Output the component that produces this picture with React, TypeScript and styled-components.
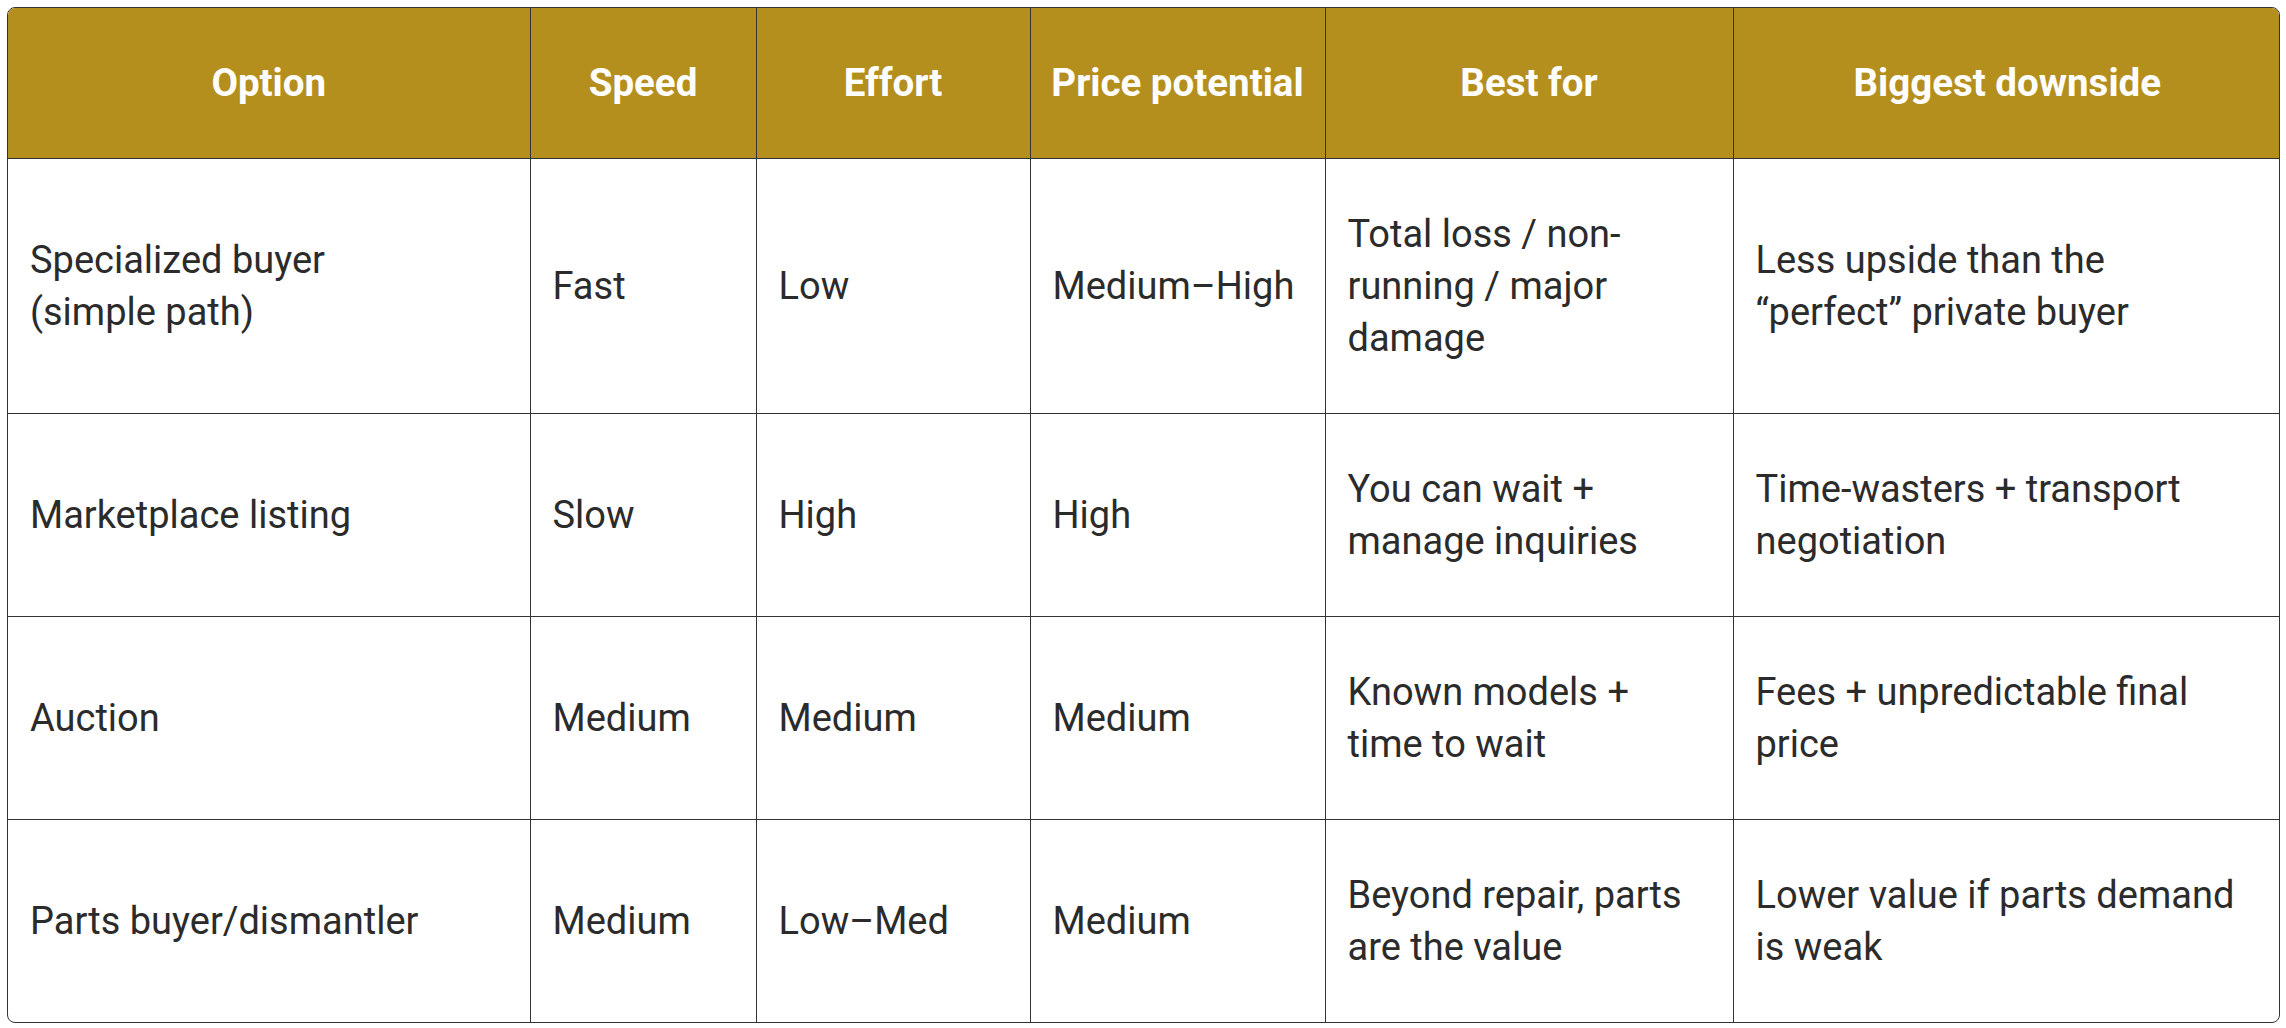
import React from "react";
import styled, { createGlobalStyle } from "styled-components";

const GlobalStyle = createGlobalStyle`
  html, body {
    margin: 0;
    padding: 0;
    background: #fff;
  }
  body {
    font-family: Roboto, "Liberation Sans", sans-serif;
  }
`;

const Page = styled.div`
  padding: 7px 6px 7px 7px;
`;

const Frame = styled.div`
  border: 1px solid #333;
  border-radius: 8px;
  overflow: hidden;
`;

const Table = styled.table`
  width: 100%;
  border-collapse: collapse;
  table-layout: fixed;
`;

const HeadCell = styled.th`
  background: #b58f1e;
  color: #fff;
  font-weight: 700;
  font-size: 38.5px;
  line-height: 52px;
  padding: 49px 10px;
  text-align: center;
  border-left: 1px solid #333;
  border-bottom: 1px solid #333;
  &:first-child {
    border-left: none;
  }
`;

const Cell = styled.td`
  color: #2b2b2b;
  font-size: 38px;
  line-height: 52px;
  padding: 49px 22px;
  vertical-align: middle;
  border-left: 1px solid #333;
  border-top: 1px solid #333;
  &:first-child {
    border-left: none;
  }
`;

const Row = styled.tr`
  &:first-child td {
    border-top: none;
  }
`;

const columns = [
  { label: "Option", width: 522 },
  { label: "Speed", width: 226 },
  { label: "Effort", width: 274 },
  { label: "Price potential", width: 295 },
  { label: "Best for", width: 408 },
  { label: "Biggest downside", width: 548 },
];

const rows: React.ReactNode[][] = [
  [
    <>
      Specialized buyer
      <br />
      (simple path)
    </>,
    "Fast",
    "Low",
    "Medium–High",
    "Total loss / non-running / major damage",
    "Less upside than the “perfect” private buyer",
  ],
  [
    "Marketplace listing",
    "Slow",
    "High",
    "High",
    "You can wait + manage inquiries",
    "Time-wasters + transport negotiation",
  ],
  [
    "Auction",
    "Medium",
    "Medium",
    "Medium",
    "Known models + time to wait",
    "Fees + unpredictable final price",
  ],
  [
    "Parts buyer/dismantler",
    "Medium",
    "Low–Med",
    "Medium",
    "Beyond repair, parts are the value",
    "Lower value if parts demand is weak",
  ],
];

export default function App() {
  return (
    <Page>
      <GlobalStyle />
      <Frame>
        <Table>
          <colgroup>
            {columns.map((c) => (
              <col key={c.label} style={{ width: c.width }} />
            ))}
          </colgroup>
          <thead>
            <tr>
              {columns.map((c) => (
                <HeadCell key={c.label}>{c.label}</HeadCell>
              ))}
            </tr>
          </thead>
          <tbody>
            {rows.map((r, ri) => (
              <Row key={ri}>
                {r.map((v, i) => (
                  <Cell key={i}>{v}</Cell>
                ))}
              </Row>
            ))}
          </tbody>
        </Table>
      </Frame>
    </Page>
  );
}
